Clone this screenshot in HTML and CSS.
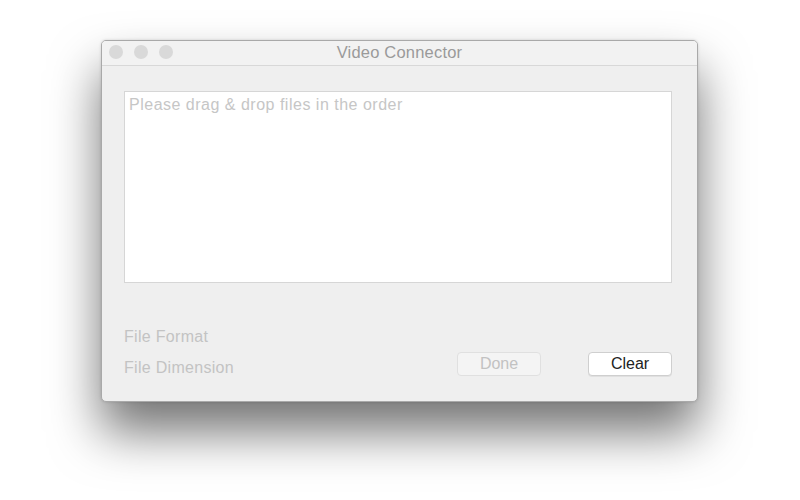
FILE: index.html
```html
<!DOCTYPE html>
<html>
<head>
<meta charset="utf-8">
<link rel="stylesheet" href="styles.css">
</head>
<body>
<div class="window">
  <div class="titlebar">
    <div class="lights">
      <span class="light"></span>
      <span class="light"></span>
      <span class="light"></span>
    </div>
    <div class="title">Video Connector</div>
  </div>
  <div class="content">
    <div class="dropbox">Please drag &amp; drop files in the order</div>
    <div class="bottom">
      <div class="labels">
        <div class="label">File Format</div>
        <div class="label">File Dimension</div>
      </div>
      <div class="buttons">
        <button class="btn disabled">Done</button>
        <button class="btn">Clear</button>
      </div>
    </div>
  </div>
</div>
</body>
</html>
```
FILE: styles.css
```css
html, body {
  margin: 0;
  padding: 0;
  background: #ffffff;
  width: 800px;
  height: 500px;
  overflow: hidden;
  font-family: "Liberation Sans", Arial, sans-serif;
}
.window {
  margin: 40px 0 0 101px;
  width: 597px;
  height: 362px;
  box-sizing: border-box;
  border: 1px solid #a9a9a9;
  border-radius: 5px;
  background: #efefef;
  box-shadow: 0 30px 50px rgba(0, 0, 0, 0.55), 0 0 3px rgba(0,0,0,0.15);
  overflow: hidden;
  display: flex;
  flex-direction: column;
}
.titlebar {
  height: 24px;
  flex: none;
  background: #f2f2f2;
  border-bottom: 1px solid #d8d8d8;
  position: relative;
  display: flex;
  align-items: center;
  justify-content: center;
}
.lights {
  position: absolute;
  left: 7px;
  top: 4px;
  display: flex;
  gap: 11px;
}
.light {
  width: 14px;
  height: 14px;
  border-radius: 50%;
  background: #d9d9d9;
  display: block;
}
.title {
  font-size: 16.5px;
  line-height: 20px;
  color: #9a9a9a;
  letter-spacing: 0.2px;
  margin-bottom: 3px;
}
.content {
  padding: 25px 25px 0 22px;
  display: flex;
  flex-direction: column;
}
.dropbox {
  height: 192px;
  box-sizing: border-box;
  background: #ffffff;
  border: 1px solid #d6d6d6;
  padding: 3px 4px;
  font-size: 16px;
  letter-spacing: 0.5px;
  line-height: 20px;
  color: #c6c6c6;
}
.bottom {
  display: flex;
  justify-content: space-between;
  align-items: flex-end;
  margin-top: 44px;
}
.labels {
  display: flex;
  flex-direction: column;
  gap: 11px;
}
.label {
  font-size: 16px;
  line-height: 20px;
  color: #c3c3c3;
  letter-spacing: 0.3px;
}
.buttons {
  display: flex;
  gap: 47px;
  margin-bottom: 2px;
}
.btn {
  width: 84px;
  height: 24px;
  box-sizing: border-box;
  border: 1px solid #cfcfcf;
  border-radius: 4px;
  background: #ffffff;
  font-family: "Liberation Sans", Arial, sans-serif;
  font-size: 16px;
  color: #222222;
  padding: 0;
  box-shadow: 0 1px 0 rgba(0,0,0,0.06);
}
.btn.disabled {
  background: #f4f4f4;
  border-color: #e0e0e0;
  color: #c2c2c2;
  box-shadow: none;
}
```
